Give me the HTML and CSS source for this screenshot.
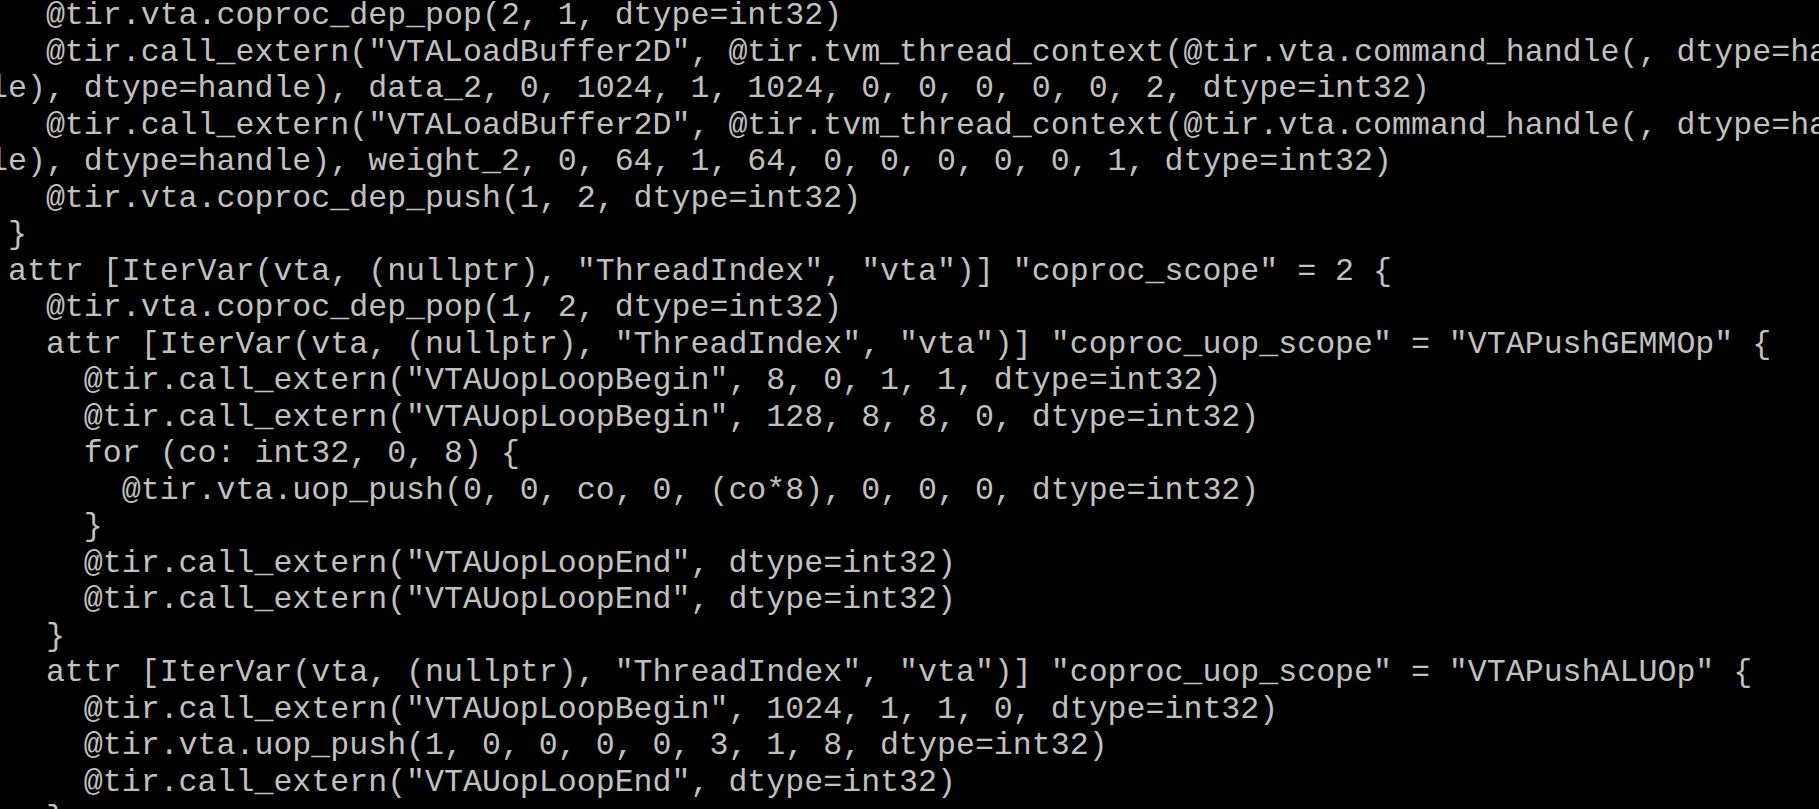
FILE: index.html
```html
<!DOCTYPE html>
<html lang="en">
<head>
<meta charset="utf-8">
<title>Terminal</title>
<link rel="stylesheet" href="styles.css">
</head>
<body>
<main class="console">
<pre class="output">   @tir.vta.coproc_dep_pop(2, 1, dtype=int32)
   @tir.call_extern("VTALoadBuffer2D", @tir.tvm_thread_context(@tir.vta.command_handle(, dtype=ha
le), dtype=handle), data_2, 0, 1024, 1, 1024, 0, 0, 0, 0, 0, 2, dtype=int32)
   @tir.call_extern("VTALoadBuffer2D", @tir.tvm_thread_context(@tir.vta.command_handle(, dtype=ha
le), dtype=handle), weight_2, 0, 64, 1, 64, 0, 0, 0, 0, 0, 1, dtype=int32)
   @tir.vta.coproc_dep_push(1, 2, dtype=int32)
 }
 attr [IterVar(vta, (nullptr), "ThreadIndex", "vta")] "coproc_scope" = 2 {
   @tir.vta.coproc_dep_pop(1, 2, dtype=int32)
   attr [IterVar(vta, (nullptr), "ThreadIndex", "vta")] "coproc_uop_scope" = "VTAPushGEMMOp" {
     @tir.call_extern("VTAUopLoopBegin", 8, 0, 1, 1, dtype=int32)
     @tir.call_extern("VTAUopLoopBegin", 128, 8, 8, 0, dtype=int32)
     for (co: int32, 0, 8) {
       @tir.vta.uop_push(0, 0, co, 0, (co*8), 0, 0, 0, dtype=int32)
     }
     @tir.call_extern("VTAUopLoopEnd", dtype=int32)
     @tir.call_extern("VTAUopLoopEnd", dtype=int32)
   }
   attr [IterVar(vta, (nullptr), "ThreadIndex", "vta")] "coproc_uop_scope" = "VTAPushALUOp" {
     @tir.call_extern("VTAUopLoopBegin", 1024, 1, 1, 0, dtype=int32)
     @tir.vta.uop_push(1, 0, 0, 0, 0, 3, 1, 8, dtype=int32)
     @tir.call_extern("VTAUopLoopEnd", dtype=int32)
   }</pre>
</main>
</body>
</html>
```

FILE: styles.css
```css
html, body {
  margin: 0;
  padding: 0;
  background: #000;
  height: 809px;
  overflow: hidden;
}

.console {
  width: 1819px;
  height: 809px;
  overflow: hidden;
  background: #000;
}

.output {
  margin: -2px 0 0 -11px;
  font-family: "Liberation Mono", "Courier New", monospace;
  font-size: 31.6px;
  line-height: 36.5px;
  color: #c0c0c0;
  white-space: pre;
}
```
